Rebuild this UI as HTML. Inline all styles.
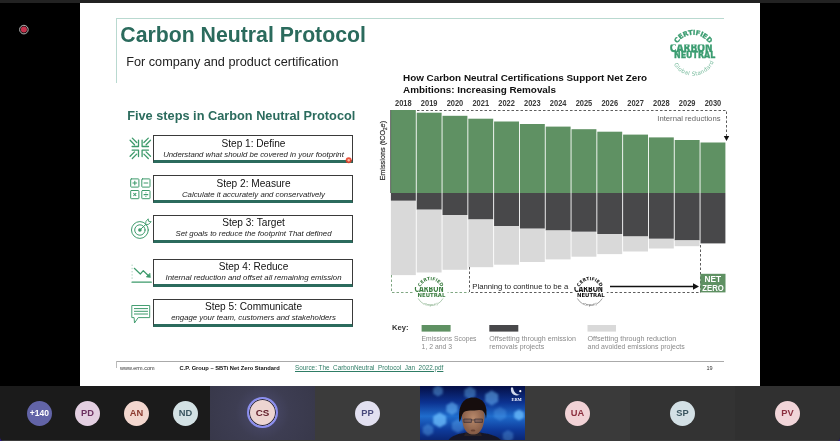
<!DOCTYPE html>
<html><head><meta charset="utf-8"><title>Carbon Neutral Protocol</title>
<style>
html,body{margin:0;padding:0;background:#000;}
body{width:840px;height:441px;position:relative;overflow:hidden;font-family:"Liberation Sans",sans-serif;}
.abs{position:absolute}
#topbar{left:0;top:0;width:840px;height:3px;background:#222}
#slide{left:80px;top:3px;width:680px;height:383px;background:#fff}
#rec{left:19px;top:25px;width:8px;height:8px;border-radius:50%;background:#c4314b;border:1px solid #e8e8e8;box-shadow:0 0 0 0.5px #555}
.title{left:120.3px;top:22px;font-size:21.25px;font-weight:bold;color:#2b6b5d;white-space:nowrap;line-height:26px}
.sub{left:126.2px;top:53.7px;font-size:12.7px;color:#222;white-space:nowrap;line-height:16px}
.h2{left:127.2px;top:107.5px;font-size:12.75px;font-weight:bold;color:#2b6b5d;white-space:nowrap;line-height:16px}
.step{position:absolute;left:153px;width:197px;padding-left:1px;height:24px;border:1px solid #3a3a3a;border-bottom:3px solid #2b6b5d;text-align:center;background:#fff}
.st{font-size:10.1px;color:#111;line-height:12px;margin-top:1.9px;white-space:nowrap}
.ss{font-size:7.8px;font-style:italic;color:#222;line-height:10px;margin-top:0.2px;white-space:nowrap}
.yr{font:bold 8.3px "Liberation Sans",sans-serif;fill:#3a3a3a;text-anchor:middle}
.ct{left:403px;font-size:9.9px;font-weight:bold;color:#111;white-space:nowrap;line-height:13px}
.os{font-family:"Liberation Sans",sans-serif}
#bar{left:0;top:386px;width:840px;height:55px;background:#1b1b1b;border-radius:0 0 4px 4px;overflow:hidden}
.tile{position:absolute;top:0;height:55px;width:105px}
.av{position:absolute;top:14.5px;width:25px;height:25px;border-radius:50%;text-align:center;line-height:25px;font-weight:bold;font-family:"Liberation Sans",sans-serif}
.ft{top:363.7px;font-size:5.5px;color:#333;white-space:nowrap;line-height:8px}
</style></head><body>
<div id="root" style="position:absolute;left:0;top:0;width:840px;height:441px;will-change:transform;overflow:hidden">
<div id="topbar" class="abs"></div>
<div id="slide" class="abs"></div>
<div class="abs" style="left:116px;top:18px;width:608px;height:1px;background:#b9d9d0"></div>
<div class="abs" style="left:116px;top:18px;width:1px;height:65px;background:#b9d9d0"></div>
<div class="abs title">Carbon Neutral Protocol</div>
<div class="abs sub">For company and product certification</div>
<div class="abs h2">Five steps in Carbon Neutral Protocol</div>
<div class="step" style="top:135px"><div class="st">Step 1: Define</div><div class="ss">Understand what should be covered in your footprint</div></div>
<div class="step" style="top:175px"><div class="st">Step 2: Measure</div><div class="ss">Calculate it accurately and conservatively</div></div>
<div class="step" style="top:215px"><div class="st" style="margin-top:1px">Step 3: Target</div><div class="ss">Set goals to reduce the footprint That defined</div></div>
<div class="step" style="top:259px"><div class="st" style="margin-top:1px">Step 4: Reduce</div><div class="ss">Internal reduction and offset all remaining emission</div></div>
<div class="step" style="top:299px"><div class="st" style="margin-top:1px">Step 5: Communicate</div><div class="ss">engage your team, customers and stakeholders</div></div>

<div class="abs ct" style="top:70.5px">How Carbon Neutral Certifications Support Net Zero</div>
<div class="abs ct" style="top:82.8px">Ambitions: Increasing Removals</div>
<svg class="abs" style="left:0;top:0;will-change:transform" width="840" height="441" viewBox="0 0 840 441">
<rect x="390.90" y="110" width="24.90" height="83.00" fill="#5f9163"/>
<rect x="390.90" y="193.0" width="24.90" height="7.80" fill="#48484a"/>
<rect x="390.90" y="200.8" width="24.90" height="74.30" fill="#d9d9d9"/>
<text x="403.35" y="106" class="yr" dy="-0.5" textLength="16.6" lengthAdjust="spacingAndGlyphs">2018</text>
<rect x="416.70" y="112.7" width="24.90" height="80.30" fill="#5f9163"/>
<rect x="416.70" y="193.0" width="24.90" height="16.70" fill="#48484a"/>
<rect x="416.70" y="209.7" width="24.90" height="62.80" fill="#d9d9d9"/>
<text x="429.15" y="106" class="yr" dy="-0.5" textLength="16.6" lengthAdjust="spacingAndGlyphs">2019</text>
<rect x="442.50" y="115.8" width="24.90" height="77.20" fill="#5f9163"/>
<rect x="442.50" y="193.0" width="24.90" height="22.00" fill="#48484a"/>
<rect x="442.50" y="215" width="24.90" height="54.80" fill="#d9d9d9"/>
<text x="454.95" y="106" class="yr" dy="-0.5" textLength="16.6" lengthAdjust="spacingAndGlyphs">2020</text>
<rect x="468.30" y="118.7" width="24.90" height="74.30" fill="#5f9163"/>
<rect x="468.30" y="193.0" width="24.90" height="26.50" fill="#48484a"/>
<rect x="468.30" y="219.5" width="24.90" height="47.70" fill="#d9d9d9"/>
<text x="480.75" y="106" class="yr" dy="-0.5" textLength="16.6" lengthAdjust="spacingAndGlyphs">2021</text>
<rect x="494.10" y="121.5" width="24.90" height="71.50" fill="#5f9163"/>
<rect x="494.10" y="193.0" width="24.90" height="33.00" fill="#48484a"/>
<rect x="494.10" y="226" width="24.90" height="38.70" fill="#d9d9d9"/>
<text x="506.55" y="106" class="yr" dy="-0.5" textLength="16.6" lengthAdjust="spacingAndGlyphs">2022</text>
<rect x="519.90" y="124" width="24.90" height="69.00" fill="#5f9163"/>
<rect x="519.90" y="193.0" width="24.90" height="35.70" fill="#48484a"/>
<rect x="519.90" y="228.7" width="24.90" height="33.30" fill="#d9d9d9"/>
<text x="532.35" y="106" class="yr" dy="-0.5" textLength="16.6" lengthAdjust="spacingAndGlyphs">2023</text>
<rect x="545.70" y="126.6" width="24.90" height="66.40" fill="#5f9163"/>
<rect x="545.70" y="193.0" width="24.90" height="37.50" fill="#48484a"/>
<rect x="545.70" y="230.5" width="24.90" height="28.90" fill="#d9d9d9"/>
<text x="558.15" y="106" class="yr" dy="-0.5" textLength="16.6" lengthAdjust="spacingAndGlyphs">2024</text>
<rect x="571.50" y="129.2" width="24.90" height="63.80" fill="#5f9163"/>
<rect x="571.50" y="193.0" width="24.90" height="38.80" fill="#48484a"/>
<rect x="571.50" y="231.8" width="24.90" height="24.90" fill="#d9d9d9"/>
<text x="583.95" y="106" class="yr" dy="-0.5" textLength="16.6" lengthAdjust="spacingAndGlyphs">2025</text>
<rect x="597.30" y="131.7" width="24.90" height="61.30" fill="#5f9163"/>
<rect x="597.30" y="193.0" width="24.90" height="41.00" fill="#48484a"/>
<rect x="597.30" y="234" width="24.90" height="20.10" fill="#d9d9d9"/>
<text x="609.75" y="106" class="yr" dy="-0.5" textLength="16.6" lengthAdjust="spacingAndGlyphs">2026</text>
<rect x="623.10" y="134.6" width="24.90" height="58.40" fill="#5f9163"/>
<rect x="623.10" y="193.0" width="24.90" height="43.50" fill="#48484a"/>
<rect x="623.10" y="236.5" width="24.90" height="15.00" fill="#d9d9d9"/>
<text x="635.55" y="106" class="yr" dy="-0.5" textLength="16.6" lengthAdjust="spacingAndGlyphs">2027</text>
<rect x="648.90" y="137.4" width="24.90" height="55.60" fill="#5f9163"/>
<rect x="648.90" y="193.0" width="24.90" height="45.80" fill="#48484a"/>
<rect x="648.90" y="238.8" width="24.90" height="9.70" fill="#d9d9d9"/>
<text x="661.35" y="106" class="yr" dy="-0.5" textLength="16.6" lengthAdjust="spacingAndGlyphs">2028</text>
<rect x="674.70" y="140" width="24.90" height="53.00" fill="#5f9163"/>
<rect x="674.70" y="193.0" width="24.90" height="47.40" fill="#48484a"/>
<rect x="674.70" y="240.4" width="24.90" height="5.80" fill="#d9d9d9"/>
<text x="687.15" y="106" class="yr" dy="-0.5" textLength="16.6" lengthAdjust="spacingAndGlyphs">2029</text>
<rect x="700.50" y="142.5" width="24.90" height="50.50" fill="#5f9163"/>
<rect x="700.50" y="193.0" width="24.90" height="50.40" fill="#48484a"/>
<text x="712.95" y="106" class="yr" dy="-0.5" textLength="16.6" lengthAdjust="spacingAndGlyphs">2030</text>
<path d="M417 110.5 H726.5 V136" fill="none" stroke="#333" stroke-width="0.8" stroke-dasharray="2.5 2"/>
<path d="M723.8 136 h5.4 l-2.7 5z" fill="#111"/>
<text x="720.5" y="121" text-anchor="end" font-size="7.7" fill="#666" class="os">Internal reductions</text>
<path d="M390.6 110 V193" stroke="#444" stroke-width="0.8"/>
<text transform="translate(385.4,180.6) rotate(-90)" font-size="7.3" fill="#333" stroke="#333" stroke-width="0.2" class="os">Emissions (tCO<tspan font-size="4.5" dy="1.5">2</tspan><tspan dy="-1.5" font-style="italic">e</tspan>)</text>
<path d="M391.5 275 V292.5 H469" fill="none" stroke="#5f9163" stroke-width="0.8" stroke-dasharray="2.5 2"/>
<path d="M469.5 267 V292.5 H700.5 V244" fill="none" stroke="#333" stroke-width="0.8" stroke-dasharray="2.5 2"/>
<text x="472.3" y="289" font-size="7.9" fill="#222" class="os" textLength="96" lengthAdjust="spacingAndGlyphs">Planning to continue to be a</text>
<path d="M610 286.5 H694" stroke="#111" stroke-width="1.4"/>
<path d="M693 283.3 l6 3.2 l-6 3.2z" fill="#111"/>
<rect x="700.3" y="273.8" width="25.2" height="18.6" fill="#5f9163"/>
<text x="704.6" y="282.3" font-size="8.6" font-weight="bold" fill="#fff" textLength="16.6" lengthAdjust="spacingAndGlyphs" class="os">NET</text>
<text x="702.3" y="290.6" font-size="8.6" font-weight="bold" fill="#fff" textLength="21.4" lengthAdjust="spacingAndGlyphs" class="os">ZERO</text>
<text x="392" y="329.8" font-size="7.6" font-weight="bold" fill="#333" class="os">Key:</text>
<rect x="421.6" y="325" width="29" height="6.6" fill="#5f9163"/>
<rect x="489.3" y="325" width="29" height="6.6" fill="#48484a"/>
<rect x="587.5" y="325" width="28.5" height="6.6" fill="#d9d9d9"/>
<g font-size="7" fill="#8a8a8a" class="os" lengthAdjust="spacingAndGlyphs">
<text x="421.6" y="341" textLength="54.9" lengthAdjust="spacingAndGlyphs">Emissions Scopes</text><text x="421.6" y="348.8" textLength="30.4" lengthAdjust="spacingAndGlyphs">1, 2 and 3</text>
<text x="489.3" y="341" textLength="86.6" lengthAdjust="spacingAndGlyphs">Offsetting through emission</text><text x="489.3" y="348.8" textLength="54.9" lengthAdjust="spacingAndGlyphs">removals projects</text>
<text x="587.5" y="341" textLength="88.7" lengthAdjust="spacingAndGlyphs">Offsetting through reduction</text><text x="587.5" y="348.8" textLength="97.3" lengthAdjust="spacingAndGlyphs">and avoided emissions projects</text>
</g>

<g fill="none" stroke="#3d9a6b" stroke-width="0.95" stroke-linecap="round" stroke-linejoin="round">
<!-- icon1 -->
<g transform="translate(140.3,148.3)" stroke-width="1.3">
<g id="arw"><path d="M-8.2 -1.8 H-1.8 V-8.2 M-10.2 -8 L-5.8 -3.6 M-8 -10.2 L-3.6 -5.8"/></g>
<g transform="scale(-1,1)"><path d="M-8.2 -1.8 H-1.8 V-8.2 M-10.2 -8 L-5.8 -3.6 M-8 -10.2 L-3.6 -5.8"/></g>
<g transform="scale(1,-1)"><path d="M-8.2 -1.8 H-1.8 V-8.2 M-10.2 -8 L-5.8 -3.6 M-8 -10.2 L-3.6 -5.8"/></g>
<g transform="scale(-1,-1)"><path d="M-8.2 -1.8 H-1.8 V-8.2 M-10.2 -8 L-5.8 -3.6 M-8 -10.2 L-3.6 -5.8"/></g>
</g>
<!-- icon2 -->
<g stroke-width="1.0">
<rect x="130.7" y="178.9" width="8.2" height="8.2" rx="0.6"/>
<rect x="141.8" y="178.9" width="8.2" height="8.2" rx="0.6"/>
<rect x="130.7" y="190.5" width="8.2" height="8.2" rx="0.6"/>
<rect x="141.8" y="190.5" width="8.2" height="8.2" rx="0.6"/>
<path d="M132.5 183 h4.6 M134.8 180.7 v4.6 M143.6 183 h4.6 M133.4 193.2 l2.8 2.8 M136.2 193.2 l-2.8 2.8 M143.6 194.6 h4.6" stroke-width="1.05" stroke-linecap="butt"/>
<path d="M145.9 192.7 v0.2 M145.9 196.4 v0.2" stroke-width="0.9"/>
</g>
<!-- icon3 -->
<circle cx="139.9" cy="230" r="8.4" stroke-width="1"/>
<circle cx="139.9" cy="230" r="5.2" stroke-width="1"/>
<circle cx="139.9" cy="230" r="1.8" fill="#3d9a6b" stroke="none"/>
<path d="M139.9 230 L147 223.2" stroke-width="1"/>
<path d="M145.6 224.4 L146 221.3 L148.2 218.8 L148.6 221.3 L151.2 221.7 L148.9 224 Z" fill="#fff" stroke-width="0.9"/>
<!-- icon4 -->
<path d="M132 282.2 H151.3" stroke-width="1.2"/>
<path d="M134.3 268.3 L140.3 274 L143.3 270.7 L149 276.2" stroke-width="1.2"/>
<path d="M150.2 277.4 L146.2 276.9 L149.7 273.4 Z" fill="#3d9a6b" stroke-width="0.6"/>
<path d="M132.1 265 V279" stroke-width="1" stroke-dasharray="0.6 2.6" opacity="0.45"/>
<!-- icon5 -->
<path d="M132.2 305.5 H149.7 V317.6 H138.2 L134.5 323 L134.1 317.6 H132.2 Z" stroke-width="0.95"/>
<path d="M134.4 308.6 H147.6 M134.4 311.3 H147.6 M134.4 314 H147.6" stroke-width="1"/>
</g>

<defs>
<path id="arcT" d="M0 11.6 A11.6 11.6 0 1 1 0 -11.6 A11.6 11.6 0 1 1 0 11.6"/>
<path id="arcB" d="M0 -15.2 A15.2 15.2 0 1 0 0 15.2 A15.2 15.2 0 1 0 0 -15.2"/>
<path id="bigT" d="M0 17.5 A17.5 17.5 0 1 1 0 -17.5 A17.5 17.5 0 1 1 0 17.5"/>
<path id="bigB" d="M0 -24.5 A24.5 24.5 0 1 0 0 24.5 A24.5 24.5 0 1 0 0 -24.5"/>
</defs>
<!-- small logo green -->
<g transform="translate(430.6,291.5)" fill="#3b7d40" font-family="'DejaVu Sans','Liberation Sans',sans-serif">
<rect x="-16.5" y="-15.5" width="33.5" height="31.5" fill="#fff"/>
<clipPath id="lgc"><rect x="-18" y="-4.6" width="36" height="6"/></clipPath>
<path id="lgt" d="M0 11.3 A11.3 11.3 0 1 1 0 -11.3 A11.3 11.3 0 1 1 0 11.3" fill="none"/>
<path id="lgb" d="M0 -14.6 A14.6 14.6 0 1 0 0 14.6 A14.6 14.6 0 1 0 0 -14.6" fill="none"/>
<text font-size="4.6" font-weight="bold" text-anchor="middle" letter-spacing="-0.05"><textPath href="#lgt" startOffset="50%">CERTIFIED</textPath></text>
<text x="-16" y="0.8" font-size="8.4" font-weight="bold" textLength="29" lengthAdjust="spacingAndGlyphs" clip-path="url(#lgc)">CARBON</text>
<text x="-13.1" y="5.1" font-size="5.5" font-weight="bold" textLength="27.8" lengthAdjust="spacingAndGlyphs">NEUTRAL</text>
<path d="M-12.4 7 A14.2 14.2 0 0 0 -7 12.4 M7 12.4 A14.2 14.2 0 0 0 12.4 7" fill="none" stroke="#3b7d40" stroke-width="0.4"/>
<text font-size="3.3" text-anchor="middle" opacity="0.85"><textPath href="#lgb" startOffset="50%">company</textPath></text>
</g>
<!-- small logo black -->
<g transform="translate(589.8,291.5)" fill="#111" font-family="'DejaVu Sans','Liberation Sans',sans-serif">
<rect x="-16.5" y="-15.5" width="33.5" height="31.5" fill="#fff"/>
<clipPath id="lbc"><rect x="-18" y="-4.6" width="36" height="6"/></clipPath>
<path id="lbt" d="M0 11.3 A11.3 11.3 0 1 1 0 -11.3 A11.3 11.3 0 1 1 0 11.3" fill="none"/>
<path id="lbb" d="M0 -14.6 A14.6 14.6 0 1 0 0 14.6 A14.6 14.6 0 1 0 0 -14.6" fill="none"/>
<text font-size="4.6" font-weight="bold" text-anchor="middle" letter-spacing="-0.05"><textPath href="#lbt" startOffset="50%">CERTIFIED</textPath></text>
<text x="-15.8" y="0.8" font-size="8.4" font-weight="bold" textLength="29" lengthAdjust="spacingAndGlyphs" clip-path="url(#lbc)">CARBON</text>
<text x="-12.9" y="5.1" font-size="5.5" font-weight="bold" textLength="27.8" lengthAdjust="spacingAndGlyphs">NEUTRAL</text>
<path d="M-12.4 7 A14.2 14.2 0 0 0 -7 12.4 M7 12.4 A14.2 14.2 0 0 0 12.4 7" fill="none" stroke="#111" stroke-width="0.4"/>
<text font-size="3.3" text-anchor="middle" opacity="0.85"><textPath href="#lbb" startOffset="50%">company</textPath></text>
</g>
<!-- big logo -->
<g transform="translate(693.2,53.5)" fill="#3a9c70" stroke="#3a9c70" font-family="'DejaVu Sans','Liberation Sans',sans-serif">
<clipPath id="cbig"><rect x="-26" y="-9.1" width="52" height="8"/></clipPath>
<path id="bigT2" d="M0 18.8 A18.8 18.8 0 1 1 0 -18.8 A18.8 18.8 0 1 1 0 18.8" fill="none" stroke="none"/>
<path id="bigB2" d="M0 -22.2 A22.2 22.2 0 1 0 0 22.2 A22.2 22.2 0 1 0 0 -22.2" fill="none" stroke="none"/>
<text font-size="6.7" font-weight="bold" text-anchor="middle" letter-spacing="-0.1" stroke-width="0.3"><textPath href="#bigT2" startOffset="50%">CERTIFIED</textPath></text>
<text x="-23.4" y="-2" font-size="12" font-weight="bold" textLength="42.8" lengthAdjust="spacingAndGlyphs" clip-path="url(#cbig)" stroke-width="0.4">CARBON</text>
<text x="-19.2" y="4.9" font-size="8.1" font-weight="bold" textLength="41.2" lengthAdjust="spacingAndGlyphs" stroke-width="0.35">NEUTRAL</text>
<text font-size="5.6" text-anchor="middle" letter-spacing="0.3" opacity="0.7" transform="rotate(-4)" stroke="none"><textPath href="#bigB2" startOffset="50%">Global Standard</textPath></text>
</g>
<circle cx="23.9" cy="29.6" r="4.3" fill="#111" stroke="#c6c6c6" stroke-width="0.9"/><circle cx="23.9" cy="29.6" r="3" fill="#c4314b"/><circle cx="348.7" cy="160.2" r="3" fill="#e8402a" opacity="0.9"/><circle cx="348.7" cy="160.2" r="1.2" fill="#ffb8a0"/></svg>
<div class="abs" style="left:116px;top:361px;width:608px;height:1px;background:#aaa"></div>
<div class="abs" style="left:116px;top:361px;width:1px;height:7px;background:#bbb"></div>
<div class="abs ft" style="left:120px">www.erm.com</div>
<div class="abs ft" style="left:179.6px;font-weight:bold;color:#111;font-size:5.75px">C.P. Group – SBTi Net Zero Standard</div>
<div class="abs ft" style="left:295px;color:#2f7d66;text-decoration:underline;font-size:6.37px">Source: The_CarbonNeutral_Protocol_Jan_2022.pdf</div>
<div class="abs ft" style="left:706.5px">19</div>
<div class="abs" style="left:0;top:430px;width:840px;height:11px;background:#2d1a8a"></div>
<div id="bar" class="abs">
<div class="tile" style="left:210px;background:radial-gradient(circle at 50% 48%,#4d4d70 0%,#3d3d52 45%,#38384a 100%)"></div>
<div class="tile" style="left:315px;background:#3b3b3b"></div>
<svg class="abs" style="left:420px;top:0;will-change:transform" width="105" height="55" viewBox="0 0 105 55">
<defs>
<linearGradient id="vbg" x1="0" y1="0" x2="0" y2="1"><stop offset="0" stop-color="#050f45"/><stop offset="0.3" stop-color="#0c3290"/><stop offset="0.55" stop-color="#1f6ccc"/><stop offset="0.8" stop-color="#0e3a9a"/><stop offset="1" stop-color="#0a2470"/></linearGradient>
<filter id="bl1" x="-20%" y="-20%" width="140%" height="140%"><feGaussianBlur stdDeviation="0.9"/></filter>
<filter id="bl2" x="-20%" y="-20%" width="140%" height="140%"><feGaussianBlur stdDeviation="0.7"/></filter>
<radialGradient id="face" cx="0.5" cy="0.45" r="0.6"><stop offset="0" stop-color="#b98a6c"/><stop offset="1" stop-color="#7d5440"/></radialGradient>
</defs>
<rect width="105" height="55" fill="url(#vbg)"/>
<g filter="url(#bl1)"><polygon points="26.2,37.8 19.7,41.5 13.2,37.8 13.2,30.2 19.7,26.5 26.2,30.2" fill="#6fc0ff" opacity="0.75"/><polygon points="37.6,25.8 32.0,29.0 26.4,25.8 26.4,19.2 32.0,16.0 37.6,19.2" fill="#6fc0ff" opacity="0.55"/><polygon points="78.2,15.8 71.7,19.5 65.2,15.8 65.2,8.2 71.7,4.5 78.2,8.2" fill="#6fc0ff" opacity="0.5"/><polygon points="103.8,31.8 99.0,34.5 94.2,31.8 94.2,26.2 99.0,23.5 103.8,26.2" fill="#6fc0ff" opacity="0.75"/><polygon points="22.8,7.8 18.0,10.5 13.2,7.8 13.2,2.2 18.0,-0.5 22.8,2.2" fill="#6fc0ff" opacity="0.4"/><polygon points="55.6,10.2 50.0,13.5 44.4,10.2 44.4,3.7 50.0,0.5 55.6,3.7" fill="#6fc0ff" opacity="0.4"/><polygon points="13.2,47.0 8.0,50.0 2.8,47.0 2.8,41.0 8.0,38.0 13.2,41.0" fill="#6fc0ff" opacity="0.35"/><polygon points="44.1,43.5 38.0,47.0 31.9,43.5 31.9,36.5 38.0,33.0 44.1,36.5" fill="#6fc0ff" opacity="0.35"/><polygon points="93.2,53.0 88.0,56.0 82.8,53.0 82.8,47.0 88.0,44.0 93.2,47.0" fill="#6fc0ff" opacity="0.3"/><polygon points="86.1,31.5 80.0,35.0 73.9,31.5 73.9,24.5 80.0,21.0 86.1,24.5" fill="#6fc0ff" opacity="0.25"/></g>
<g filter="url(#bl2)">
<path d="M28 55 C31 49 40 47.5 46 46.5 L60 46.5 C67 47.5 77 49 82 55 Z" fill="#171925"/>
<path d="M42 30 C42 22 46 19 53 19 C60 19 64.5 22 64.5 30 C64.5 38 62 44 58.5 47 C56 49 50.5 49 48 47 C44 44 42 38 42 30 Z" fill="url(#face)"/>
<path d="M39.5 36 C37.5 20 43 11.5 53 11.5 C63 11.5 68.5 19 66 33 C65.5 27 63.5 23.5 59 24 C53 25 46.5 23.5 43.5 26.5 C41.5 29 41.5 33 39.5 36 Z" fill="#15100f"/>
<path d="M43.8 33 h7.6 v3.4 h-7.6z M54.8 33 h7.6 v3.4 h-7.6z M51.4 34 h3.4" stroke="#2a2530" stroke-width="0.6" fill="rgba(50,50,80,0.3)"/>
<ellipse cx="53" cy="44.5" rx="2.4" ry="1" fill="#5a3328" opacity="0.7"/>
<path d="M46 46 C49 50 57 50 60 46 L62 50 L44 50 Z" fill="#3a2a26" opacity="0.55"/>
</g>
<path d="M91 1.5 C90 8 95 11 100 8.5 C97 9 93.5 6.5 93 1.5 Z" fill="#e8eefc" opacity="0.9"/>
<circle cx="100.3" cy="5.2" r="1.1" fill="#fff"/>
<text x="96.6" y="15.2" font-size="4.4" font-family="'Liberation Serif',serif" font-weight="bold" fill="#f2f4ff" text-anchor="middle">ERM</text>
</svg>
<div class="tile" style="left:525px;background:#3a3a3a"></div>
<div class="tile" style="left:630px;background:#333"></div>
<div class="tile" style="left:735px;background:#303030"></div>
<div class="av" style="left:26.799999999999997px;background:#6264a7;color:#fff;font-size:8.5px">+140</div>
<div class="av" style="left:75.0px;background:#e3cfe1;color:#6b2f60;font-size:9.3px">PD</div>
<div class="av" style="left:124.0px;background:#f3d7cf;color:#8b3a2e;font-size:9.3px">AN</div>
<div class="av" style="left:173.0px;background:#d3e1e4;color:#3a5560;font-size:9.3px">ND</div>
<div class="av" style="left:355.0px;background:#e2e0f0;color:#4a4a7c;font-size:9.3px">PP</div>
<div class="av" style="left:565.0px;background:#f1d2d6;color:#8b2e3e;font-size:9.3px">UA</div>
<div class="av" style="left:670.0px;background:#d3e0e5;color:#3a5560;font-size:9.3px">SP</div>
<div class="av" style="left:775.0px;background:#f1d5d9;color:#8b3040;font-size:9.3px">PV</div>

<div class="abs" style="left:0;top:53.7px;width:840px;height:1.3px;background:#3b3b3b"></div>
<div class="av" style="left:247px;top:11px;width:27px;height:27px;line-height:27px;background:#ecd5d1;color:#5e1a26;font-size:9.8px;border:2px solid #8b8ff0;box-shadow:inset 0 0 0 1px #2a2a40">CS</div>
</div>
</div>
</body></html>
